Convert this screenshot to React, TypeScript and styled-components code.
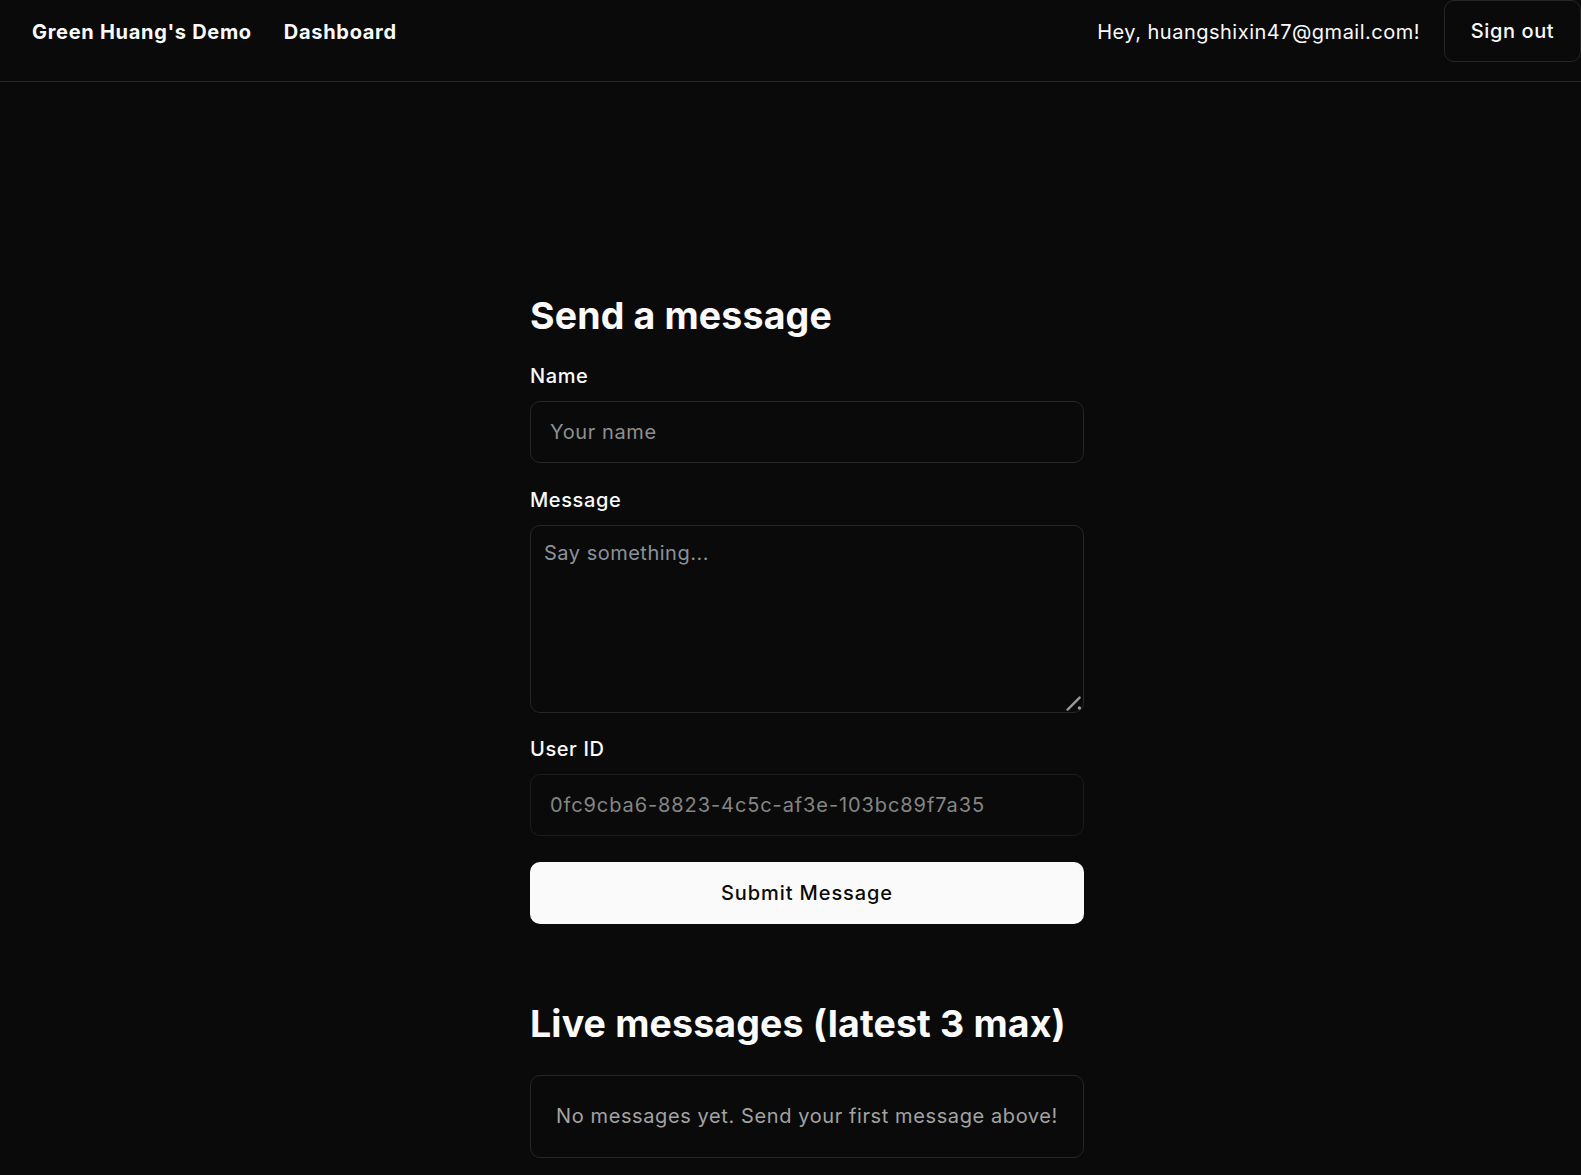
import React from "react";
import styled, { createGlobalStyle } from "styled-components";

const GlobalStyle = createGlobalStyle`
  html, body {
    margin: 0;
    padding: 0;
    background: #0a0a0a;
    color: #fafafa;
    font-family: Inter, "Noto Sans", "Liberation Sans", sans-serif;
    color-scheme: dark;
  }
  * { box-sizing: border-box; }
`;

const Page = styled.div`
  min-height: 1175px;
  background: #0a0a0a;
  display: flex;
  flex-direction: column;
`;

const Header = styled.header`
  display: flex;
  align-items: center;
  justify-content: space-between;
  height: 82px;
  padding: 0 0 19px 32px;
  border-bottom: 1px solid #262626;
`;

const NavLeft = styled.nav`
  display: flex;
  align-items: center;
  gap: 32px;
  margin-top: 2px;
`;

const NavLink = styled.a`
  font-size: 20px;
  line-height: 32px;
  font-weight: 650;
  color: #fafafa;
  text-decoration: none;
  letter-spacing: 0.7px;
`;

const NavRight = styled.div`
  display: flex;
  align-items: center;
  gap: 24px;
  height: 62px;
`;

const Greeting = styled.span`
  font-size: 20px;
  line-height: 32px;
  color: #fafafa;
  letter-spacing: 0.5px;
  margin-top: 2px;
`;

const OutlineButton = styled.button`
  height: 62px;
  width: 137px;
  border: 1px solid #262626;
  border-radius: 10px;
  background: transparent;
  color: #fafafa;
  font-family: inherit;
  font-size: 20px;
  font-weight: 500;
  letter-spacing: 0.6px;
  padding-top: 1px;
  cursor: pointer;
`;

const Main = styled.main`
  display: flex;
  justify-content: center;
  padding: 211px 0 0 33px;
`;

const Column = styled.div`
  width: 554px;
  display: flex;
  flex-direction: column;
`;

const Heading = styled.h2<{ $top?: number; $bottom: number }>`
  margin: ${(p) => p.$top ?? 0}px 0 ${(p) => p.$bottom}px;
  font-size: 37.5px;
  line-height: 45px;
  font-weight: 700;
  letter-spacing: 0.15px;
  color: #fafafa;
`;

const Form = styled.form`
  display: flex;
  flex-direction: column;
  gap: 21.5px;
`;

const Field = styled.div`
  display: flex;
  flex-direction: column;
  gap: 10px;
`;

const Label = styled.label`
  font-size: 20px;
  line-height: 30px;
  font-weight: 500;
  letter-spacing: 0.6px;
  color: #fafafa;
`;

const TextInput = styled.input<{ $muted?: boolean }>`
  height: 62px;
  width: 100%;
  padding: 0 19px;
  border: 1px solid ${(p) => (p.$muted ? "#1c1c1c" : "#262626")};
  border-radius: 10px;
  background: transparent;
  color: ${(p) => (p.$muted ? "#858585" : "#fafafa")};
  font-family: inherit;
  font-size: 20px;
  letter-spacing: ${(p) => (p.$muted ? "0.9px" : "0.6px")};
  outline: none;
  &::placeholder { color: #8f8f8f; }
  &:disabled { -webkit-text-fill-color: #858585; }
`;

const AreaWrap = styled.div`
  position: relative;
  height: 188px;
`;

const TextArea = styled.textarea`
  display: block;
  height: 188px;
  width: 100%;
  padding: 13px 13px;
  border: 1px solid #262626;
  border-radius: 10px;
  background: transparent;
  color: #fafafa;
  font-family: inherit;
  font-size: 20px;
  line-height: 28px;
  letter-spacing: 0.5px;
  resize: none;
  outline: none;
  &::placeholder { color: #8a929c; }
`;

const ResizeGrip = styled.svg`
  position: absolute;
  right: 0;
  bottom: 0;
  width: 20px;
  height: 20px;
  pointer-events: none;
`;

const SubmitButton = styled.button`
  margin-top: 4.5px;
  height: 62px;
  width: 100%;
  border: none;
  border-radius: 10px;
  background: #fafafa;
  color: #0a0a0a;
  font-family: inherit;
  font-size: 20px;
  font-weight: 500;
  letter-spacing: 0.9px;
  cursor: pointer;
`;

const EmptyBox = styled.div`
  border: 1px solid #262626;
  border-radius: 10px;
  padding: 25px;
  text-align: center;
  font-size: 20px;
  line-height: 31px;
  letter-spacing: 0.6px;
  color: #a3a3a3;
`;

export default function App() {
  return (
    <>
      <GlobalStyle />
      <Page>
        <Header>
          <NavLeft>
            <NavLink href="#">Green Huang's Demo</NavLink>
            <NavLink href="#">Dashboard</NavLink>
          </NavLeft>
          <NavRight>
            <Greeting>Hey, huangshixin47@gmail.com!</Greeting>
            <OutlineButton type="button">Sign out</OutlineButton>
          </NavRight>
        </Header>
        <Main>
          <Column>
            <Heading $bottom={23}>Send a message</Heading>
            <Form onSubmit={(e) => e.preventDefault()}>
              <Field>
                <Label htmlFor="name">Name</Label>
                <TextInput id="name" placeholder="Your name" />
              </Field>
              <Field>
                <Label htmlFor="message">Message</Label>
                <AreaWrap>
                  <TextArea id="message" placeholder="Say something..." />
                  <ResizeGrip viewBox="0 0 20 20">
                    <line
                      x1="3.6"
                      y1="16.6"
                      x2="15.6"
                      y2="4.6"
                      stroke="#9a9a9a"
                      strokeWidth="2.4"
                      strokeLinecap="round"
                    />
                    <circle cx="15.4" cy="15" r="1.7" fill="#9a9a9a" />
                  </ResizeGrip>
                </AreaWrap>
              </Field>
              <Field>
                <Label htmlFor="uid">User ID</Label>
                <TextInput
                  id="uid"
                  $muted
                  disabled
                  value="0fc9cba6-8823-4c5c-af3e-103bc89f7a35"
                  readOnly
                />
              </Field>
              <SubmitButton type="submit">Submit Message</SubmitButton>
            </Form>
            <Heading $top={77} $bottom={29}>Live messages (latest 3 max)</Heading>
            <EmptyBox>No messages yet. Send your first message above!</EmptyBox>
          </Column>
        </Main>
      </Page>
    </>
  );
}
